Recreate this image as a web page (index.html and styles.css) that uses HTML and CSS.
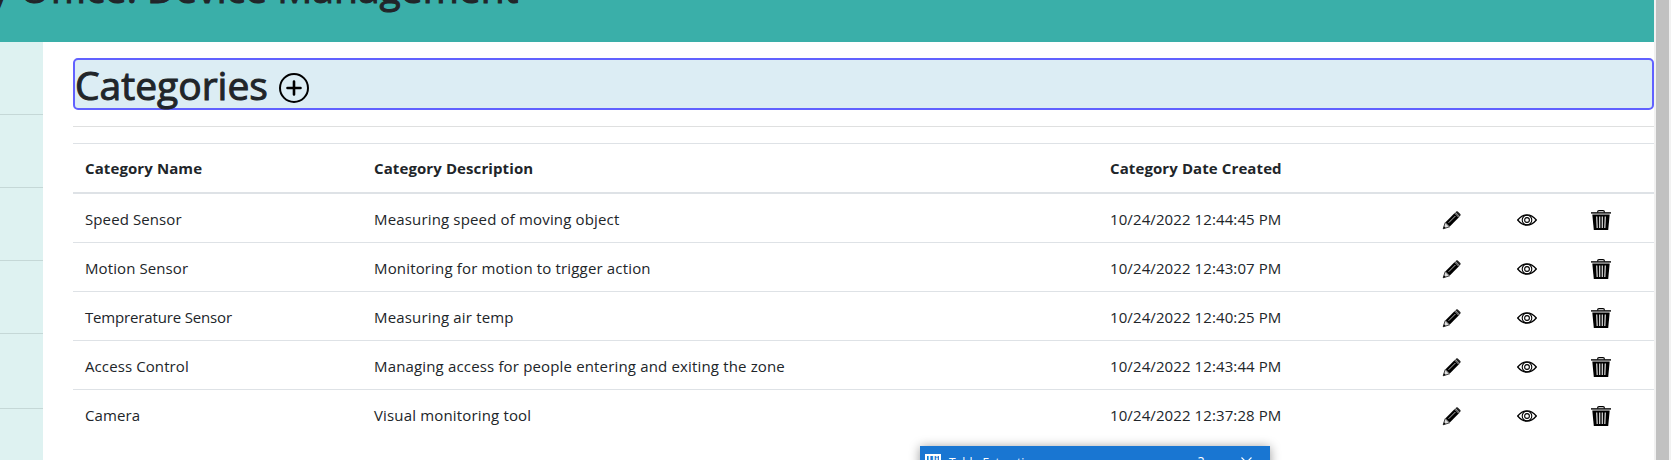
FILE: index.html
```
<!DOCTYPE html>
<html lang="en">
<head>
<meta charset="utf-8">
<title>Device Management</title>
<link rel="stylesheet" href="styles.css">
</head>
<body>
<svg width="0" height="0" class="sprite">
  <symbol id="pencil" viewBox="0 0 20 20">
    <path d="M3.500 12.200 13.200 2.500l4.300 4.300L7.800 16.500z" fill="#000"/>
    <path d="M14.200 1.600q.8-.8 1.600 0l2.500 2.500q.8.800 0 1.600l-.7.700-4.100-4.100z" fill="#222"/>
    <path d="M3.200 12.500 1.200 18.800l6.300-2z" fill="#ddd" stroke="#111" stroke-width=".8"/>
    <path d="m1.200 18.800.8-2.500 1.700 1.700z" fill="#000"/>
    <path d="m6.600 12.800 6.800-6.800M12.700 3.200l4.200 4.200" stroke="#ccc" stroke-width=".9"/>
  </symbol>
  <symbol id="eye" viewBox="0 0 20 12">
    <path d="M.7 6Q5 .8 10 .8T19.300 6Q15 11.200 10 11.200T.7 6z" fill="none" stroke="#000" stroke-width="1.300"/>
    <circle cx="10" cy="6" r="4.800" fill="none" stroke="#000" stroke-width="1.100"/>
    <circle cx="10" cy="6" r="2.400" fill="none" stroke="#000" stroke-width="1.100"/>
  </symbol>
  <symbol id="trash" viewBox="0 0 20 20">
    <path d="M0 2.200h20v1.400H0z"/>
    <path d="M6.500 2.500Q6.600.6 8 .6h4q1.400 0 1.500 1.900" fill="none" stroke="#000" stroke-width="1.200"/>
    <path d="M1.300 4.500h17.400L17.200 20H2.800z"/>
    <path d="m5.700 6.500.5 11.500M8.700 6.500V18M11.300 6.500V18M14.300 6.500 13.800 18" stroke="#ddd" stroke-width="1.200"/>
  </symbol>
</svg>
<div class="page">
  <header class="banner"><h1 class="banner-title">y Office: Device Management</h1></header>
  <div class="body">
    <nav class="sidebar">
      <div class="side-item"></div><div class="side-item"></div><div class="side-item"></div><div class="side-item"></div><div class="side-item last"></div>
    </nav>
    <main class="content">
      <div class="heading">
        <h1 class="heading-text">Categories</h1>
        <svg class="add" viewBox="0 0 30 30"><circle cx="15" cy="15" r="14" fill="none" stroke="#000" stroke-width="2"/><path d="M15 8.500v13M8.500 15h13" stroke="#000" stroke-width="2.600" stroke-linecap="round"/></svg>
      </div>
      <hr class="rule">
      <table class="table">
        <colgroup><col class="c1"><col class="c2"><col class="c3"><col class="c4"><col class="c5"><col class="c6"></colgroup>
        <thead><tr><th>Category Name</th><th>Category Description</th><th>Category Date Created</th><th></th><th></th><th></th></tr></thead>
        <tbody>
          <tr><td>Speed Sensor</td><td class="desc">Measuring speed of moving object</td><td class="date">10/24/2022 12:44:45 PM</td><td><svg class="pencil"><use href="#pencil"/></svg></td><td><svg class="eye"><use href="#eye"/></svg></td><td><svg class="trash"><use href="#trash"/></svg></td></tr>
          <tr><td>Motion Sensor</td><td class="desc">Monitoring for motion to trigger action</td><td class="date">10/24/2022 12:43:07 PM</td><td><svg class="pencil"><use href="#pencil"/></svg></td><td><svg class="eye"><use href="#eye"/></svg></td><td><svg class="trash"><use href="#trash"/></svg></td></tr>
          <tr><td class="tight">Temprerature Sensor</td><td class="desc">Measuring air temp</td><td class="date">10/24/2022 12:40:25 PM</td><td><svg class="pencil"><use href="#pencil"/></svg></td><td><svg class="eye"><use href="#eye"/></svg></td><td><svg class="trash"><use href="#trash"/></svg></td></tr>
          <tr><td>Access Control</td><td class="desc">Managing access for people entering and exiting the zone</td><td class="date">10/24/2022 12:43:44 PM</td><td><svg class="pencil"><use href="#pencil"/></svg></td><td><svg class="eye"><use href="#eye"/></svg></td><td><svg class="trash"><use href="#trash"/></svg></td></tr>
          <tr><td>Camera</td><td class="desc">Visual monitoring tool</td><td class="date">10/24/2022 12:37:28 PM</td><td><svg class="pencil"><use href="#pencil"/></svg></td><td><svg class="eye"><use href="#eye"/></svg></td><td><svg class="trash"><use href="#trash"/></svg></td></tr>
        </tbody>
      </table>
    </main>
  </div>
</div>
<div class="scrollbar"><div class="thumb"></div></div>
<div class="dialog">
  <span class="dialog-logo">Ui</span>
  <span class="dialog-title">Table Extraction</span>
  <span class="dialog-help">?</span>
  <svg class="dialog-close" viewBox="0 0 11 11"><path d="M.5.500l10 10M10.500.500l-10 10" stroke="#fff" stroke-width="1.100"/></svg>
</div>
</body>
</html>
```
FILE: styles.css
```
* { box-sizing: border-box; }
body {
  margin: 0;
  width: 1671px;
  height: 460px;
  overflow: hidden;
  display: flex;
  background: #fff;
  color: #212529;
  font-family: "Open Sans", "Noto Sans", sans-serif;
  font-size: 15px;
}
.sprite { position: absolute; }
.page { width: 1654px; height: 460px; display: flex; flex-direction: column; overflow: hidden; }
.banner {
  flex: 0 0 42px;
  background: #3aafa9;
  overflow: hidden;
  display: flex;
  align-items: flex-end;
}
.banner-title {
  margin: 0 0 30px -10px;
  font-size: 39px;
  line-height: 48px;
  font-weight: 500;
  white-space: nowrap;
  -webkit-text-stroke: 1px #212529;
}
.body { flex: 1; display: flex; }
.sidebar { flex: 0 0 43px; background: #def2f1; }
.side-item { height: 73px; border-bottom: 1px solid #c5d8d7; }
.side-item.last { height: 75px; }
.content { flex: 1; padding: 16px 0 0 30px; }
.heading {
  height: 52px;
  border: 2px solid #6161ff;
  border-radius: 5px;
  background: #dcedf4;
  display: flex;
  align-items: center;
}
.heading-text {
  margin: 0;
  padding-top: 2px;
  width: 204px;
  font-size: 39px;
  line-height: 46px;
  font-weight: 500;
  white-space: nowrap;
  -webkit-text-stroke: 1px #212529;
}
.add { width: 30px; height: 30px; margin-top: 8px; }
.rule { margin: 16px 0; border: 0; height: 1px; background: #dfe0e0; }
.table { width: 1581px; table-layout: fixed; border-collapse: separate; border-spacing: 0; }
.c1 { width: 289px; }
.c2 { width: 736px; }
.c3 { width: 333px; }
.c4 { width: 74px; }
.c5 { width: 74px; }
.c6 { width: 75px; }
.table th, .table td {
  height: 49px;
  padding: 2px 0 0 12px;
  border-top: 1px solid #dee2e6;
  text-align: left;
  vertical-align: middle;
  white-space: nowrap;
  letter-spacing: .1px;
}
.table th { height: 51px; padding-top: 0; border-bottom: 2px solid #dee2e6; font-weight: 700; }
.table tbody tr:first-child td { border-top: 0; height: 48px; }
.table .desc { letter-spacing: .16px; }
.table .tight { letter-spacing: -.16px; }
.table svg { display: block; margin-top: 2px; }
.pencil { width: 20px; height: 20px; margin-left: -1px; }
.eye { width: 20px; height: 12px; }
.trash { width: 20px; height: 20px; }
.scrollbar { width: 17px; height: 460px; padding: 0 2px; background: #f1f1f1; }
.thumb { height: 460px; background: #c1c1c1; }
.dialog {
  position: absolute;
  left: 920px;
  top: 446px;
  width: 350px;
  height: 30px;
  padding: 8px 18px 0 5px;
  display: flex;
  align-items: flex-start;
  background: #1976d2;
  color: #fff;
  box-shadow: 0 1px 11px rgba(0, 0, 0, .4);
  font-size: 12px;
  line-height: 16px;
}
.dialog-logo { width: 16px; height: 16px; border: 2px solid #fff; font-size: 10px; font-weight: 700; line-height: 9px; text-align: center; }
.dialog-title { margin-left: 8px; margin-top: 1px; }
.dialog-help { margin-left: auto; margin-right: 37px; font-size: 14px; }
.dialog-close { width: 11px; height: 11px; margin-top: 3px; }
```
